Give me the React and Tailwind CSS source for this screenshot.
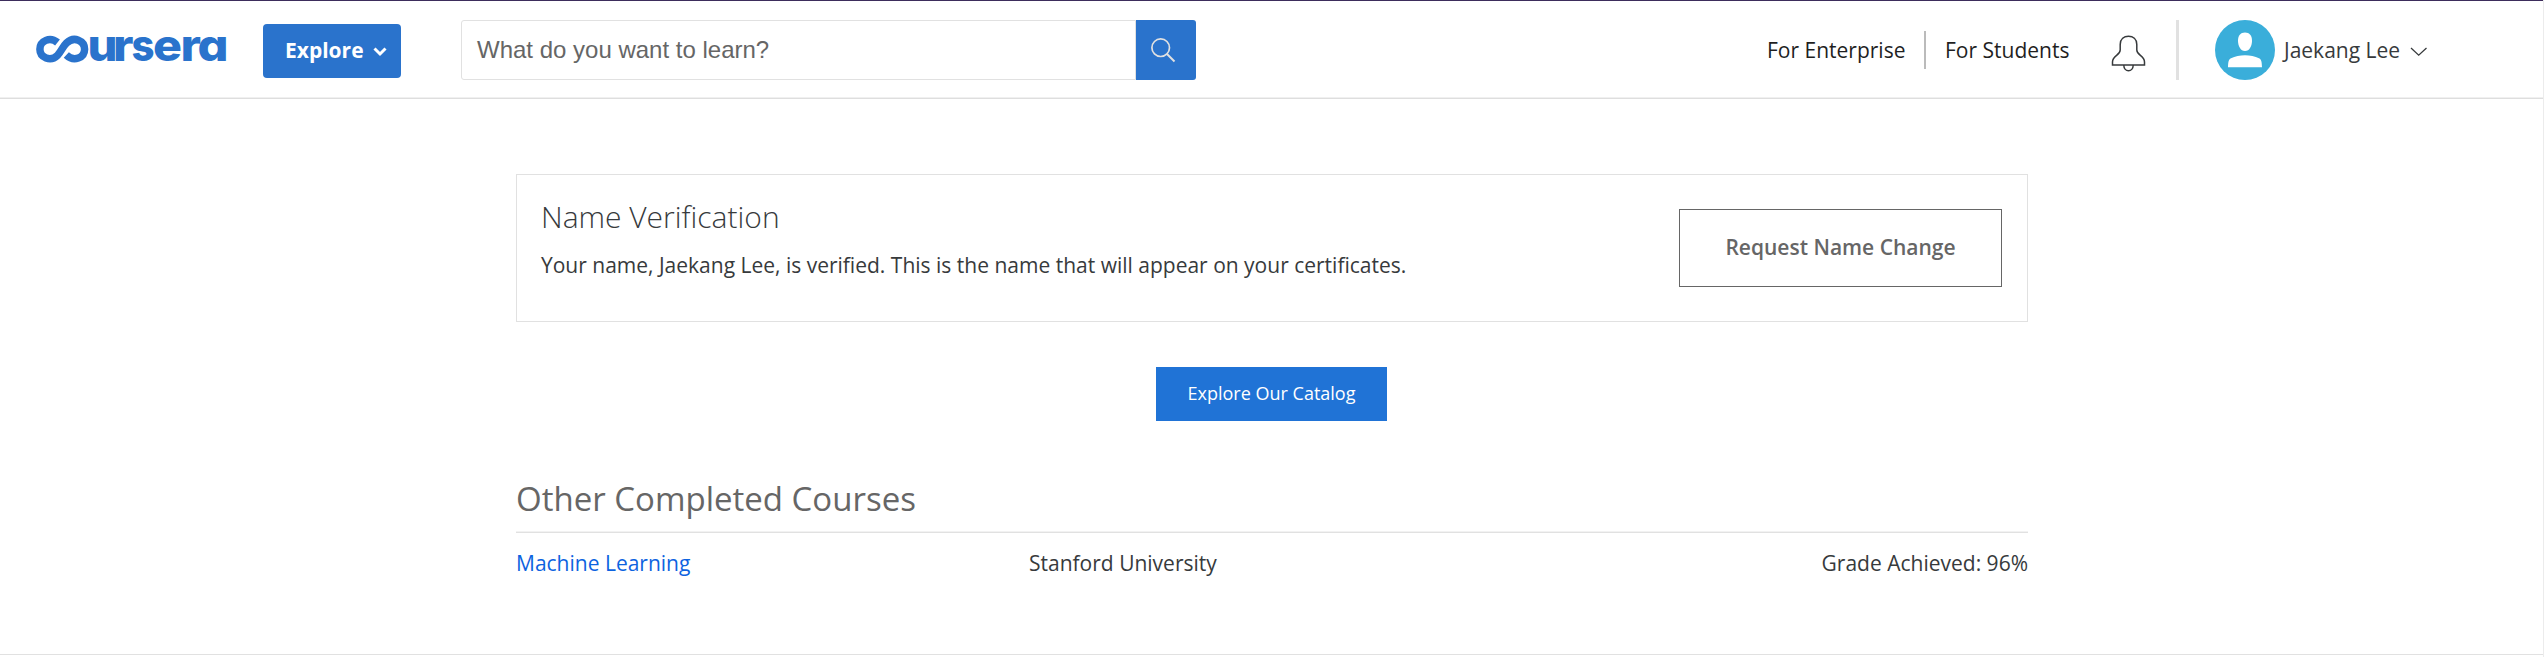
const LETTERS = [
  { ch: "u", x: 51.5, w: 30 },
  { ch: "r", x: 77, w: 20.5 },
  { ch: "s", x: 95.5, w: 23 },
  { ch: "e", x: 117, w: 29 },
  { ch: "r", x: 144.5, w: 20.5 },
  { ch: "a", x: 161.5, w: 31 },
];

function Logo() {
  return (
    <svg width="198" height="28" viewBox="0 0 198 28" className="block overflow-visible" role="img" aria-label="coursera">
      <path
        d="M21.500 7.500 C14 1.300 3.900 5.800 3.900 14.300 C3.900 22.500 14.500 27.300 21.500 20.300 C25.500 16.300 26.500 11.800 30.500 8 C38 .8 48.600 5.600 48.600 14.300 C48.600 22.700 38 27.300 30.300 20"
        fill="none"
        stroke="#2a73cc"
        strokeWidth="7.500"
      />
      {LETTERS.map((l, i) => (
        <text
          key={i}
          x={l.x}
          y="26"
          textLength={l.w}
          lengthAdjust="spacingAndGlyphs"
          fill="#2a73cc"
          className="font-['Inter'] text-[44px] font-extrabold [font-feature-settings:'cv11']"
        >
          {l.ch}
        </text>
      ))}
    </svg>
  );
}

function Header() {
  return (
    <header className="flex h-[99px] items-start border-t border-b border-t-[#3d2d5c] border-b-[#dedede] pl-9 shadow-[inset_0_-1px_0_#f0f0f0]">
      <div className="mt-[34px] w-[227px]">
        <Logo />
      </div>
      <button className="mt-[23px] flex h-[54px] w-[138px] items-center rounded-[4px] bg-[#2a73cc] pl-[22px] text-[21px] font-bold text-white">
        Explore
        <svg width="14" height="10" viewBox="0 0 14 10" className="mt-0.5 ml-[9px]" fill="none" stroke="#fff" strokeWidth="3">
          <path d="M1.500 1.500 L7 7 L12.500 1.500" />
        </svg>
      </button>
      <div className="mt-[19px] ml-[60px] flex h-[60px] w-[735px]">
        <div className="flex w-[675px] items-center rounded-l-[3px] border border-[#e1e1e1] pl-[15px] font-['Liberation_Sans',sans-serif] text-[24px] text-[#666]">
          What do you want to learn?
        </div>
        <button className="flex w-[60px] items-start rounded-r-[3px] bg-[#2a73cc] pt-[18px] pl-[15px]">
          <svg width="25" height="25" viewBox="0 0 25 25" fill="none" stroke="#e1e1e1" strokeWidth="1.700">
            <circle cx="9.700" cy="9.700" r="8.800" />
            <path d="M16 16 L23.500 23.500" strokeWidth="2" />
          </svg>
        </button>
      </div>
      <nav className="mt-[19px] ml-[571px] flex h-[60px] items-center text-[21px] text-[#1f1f1f]">
        <a className="w-[157px] pt-0.5 whitespace-nowrap">For Enterprise</a>
        <span className="h-[38px] w-[2px] bg-[#bbb]" />
        <a className="ml-[19px] w-[166px] pt-0.5 whitespace-nowrap">For Students</a>
        <svg width="36" height="38" viewBox="0 0 36 38" className="mt-2" fill="none" stroke="#373a3c" strokeWidth="1.500">
          <path d="M1.500 30 V27 C1.500 20.500 9.200 20.500 9.200 15 V9.500 C9.200 4 13 1.200 17.500 1.200 C22 1.200 25.800 4 25.800 9.500 V15 C25.800 20.500 33.500 20.500 33.500 27 V30 Z" />
          <path d="M12.800 30 C12.800 37.700 22.200 37.700 22.200 30" />
        </svg>
        <span className="ml-[29px] h-[60px] w-[3px] bg-[#e1e1e1]" />
        <svg width="60" height="60" viewBox="0 0 60 60" className="ml-9">
          <circle cx="30" cy="30" r="30" fill="#3aaeda" />
          <path d="M30 12.500 C34.500 12.500 37 15.500 37 20.500 C37 26 34.500 31 30 31 C25.500 31 23 26 23 20.500 C23 15.500 25.500 12.500 30 12.500 Z" fill="#fff" />
          <path d="M13 47.300 C13.200 43 13.300 39.500 16 38.300 C20 36.500 25 35.300 30 35.300 C35 35.300 40 36.500 44 38.300 C46.700 39.500 46.800 43 47 47.300 Z" fill="#fff" />
        </svg>
        <span className="ml-[9px] w-[126px] pt-0.5 whitespace-nowrap text-[#373a3c]">Jaekang Lee</span>
        <svg width="18" height="10" viewBox="0 0 18 10" className="mt-[3px]" fill="none" stroke="#373a3c" strokeWidth="1.300">
          <path d="M1 1 L8.700 8.200 L16.500 1" />
        </svg>
      </nav>
    </header>
  );
}

export default function App() {
  return (
    <div className="h-[657px] overflow-hidden border-r border-[#ececec] bg-white font-['Open_Sans',sans-serif]">
      <div className="h-[655px] border-b border-[#e1e1e1]">
        <Header />
        <main className="ml-[516px] w-[1512px] pt-[75px] text-[21px] text-[#373a3c]">
          <section className="flex h-[148px] items-start justify-between border border-[#e1e1e1] pl-6">
            <div className="pt-6">
              <h3 className="text-[30px] leading-[36px] font-light">Name Verification</h3>
              <p className="mt-[14px] leading-[32px]">
                Your name, Jaekang Lee, is verified. This is the name that will appear on your certificates.
              </p>
            </div>
            <button className="mt-[34px] mr-[25px] h-[78px] w-[323px] border border-[#666] font-semibold text-[#666]">
              Request Name Change
            </button>
          </section>
          <div className="mt-[45px] flex pl-[640px]">
            <button className="h-[54px] w-[231px] bg-[#2073d6] pb-px text-[18px] font-medium text-white">
              Explore Our Catalog
            </button>
          </div>
          <h2 className="mt-[55px] h-[57px] border-b border-[#e1e1e1] text-[33px] leading-[46px] text-[#666] shadow-[inset_0_-1px_0_#f2f2f2]">
            Other Completed Courses
          </h2>
          <div className="mt-[14px] flex leading-[32px]">
            <a className="w-[513px] text-[#0d63e0]">Machine Learning</a>
            <span>Stanford University</span>
            <span className="ml-auto">Grade Achieved: 96%</span>
          </div>
        </main>
      </div>
    </div>
  );
}
